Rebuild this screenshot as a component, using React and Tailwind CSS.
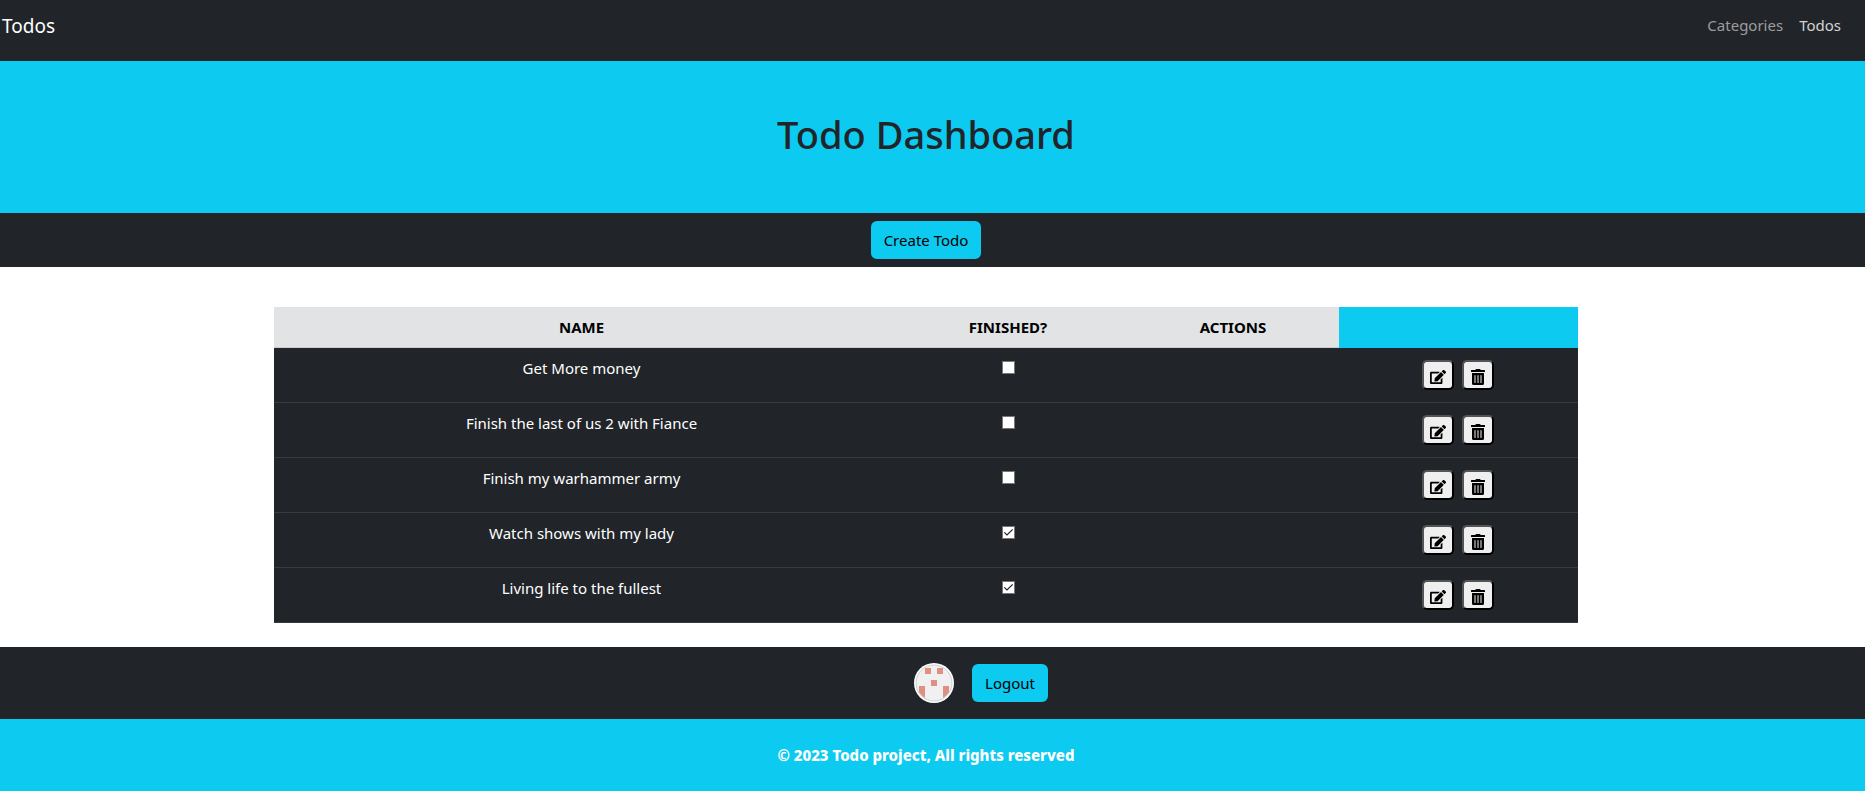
import { useState } from "react";
import { FaEdit, FaTrashAlt } from "react-icons/fa";

const initialTodos = [
  { id: 1, name: "Get More money", finished: false },
  { id: 2, name: "Finish the last of us 2 with Fiance", finished: false },
  { id: 3, name: "Finish my warhammer army", finished: false },
  { id: 4, name: "Watch shows with my lady", finished: true },
  { id: 5, name: "Living life to the fullest", finished: true },
];

function InfoButton({ children }) {
  return (
    <button type="button" className="h-[38px] rounded-md bg-[#0dcaf0] px-[13px] text-[15px] leading-6 text-black">
      {children}
    </button>
  );
}

function IconButton({ label, children }) {
  return (
    <button
      type="button"
      aria-label={label}
      className="flex h-[30px] w-8 items-end justify-center rounded-[5px] border-2 border-black bg-[#efefef] pb-[3px] text-black [border-style:outset]"
    >
      {children}
    </button>
  );
}

function Checkbox({ label, checked, onChange }) {
  return (
    <span className="relative mt-[5px] block size-[13px]">
      <input
        type="checkbox"
        aria-label={label}
        checked={checked}
        onChange={onChange}
        className="peer block size-[13px] appearance-none border border-[#767676] bg-white"
      />
      <svg
        viewBox="0 0 13 13"
        aria-hidden="true"
        className="pointer-events-none absolute inset-0 hidden size-[13px] peer-checked:block"
      >
        <path d="M2.3 6.3 5 9 10.7 3.3" fill="none" stroke="#222" strokeWidth="1.2" />
      </svg>
    </span>
  );
}

function Avatar() {
  return (
    <svg viewBox="0 0 40 40" role="img" aria-label="User avatar" className="size-10">
      <defs>
        <clipPath id="avatar-face">
          <circle cx="20" cy="20" r="17.5" />
        </clipPath>
      </defs>
      <circle cx="20" cy="20" r="20" fill="#fff" />
      <circle cx="20" cy="20" r="18" fill="#f0f0f0" stroke="#b9bdc0" strokeWidth="0.7" />
      <g clipPath="url(#avatar-face)" fill="#df8f84">
        <rect x="11" y="5" width="6" height="6" />
        <rect x="23" y="5" width="6" height="6" />
        <rect x="17" y="17" width="6" height="6" />
        <rect x="5" y="23" width="6" height="12" />
        <rect x="29" y="23" width="6" height="12" />
      </g>
    </svg>
  );
}

export default function App() {
  const [todos, setTodos] = useState(initialTodos);
  const toggle = (id) =>
    setTodos(todos.map((t) => (t.id === id ? { ...t, finished: !t.finished } : t)));

  return (
    <div className="bg-white font-['Noto_Sans','Open_Sans',sans-serif] text-[15px] leading-6 text-[#212529]">
      <nav className="flex h-[61px] items-start justify-between bg-[#212529] pt-[11px] pr-6 pl-0.5">
        <a href="#home" className="text-[19px] leading-[30px] text-white">Todos</a>
        <div className="flex gap-4 pt-0.5">
          <a href="#categories" className="text-[#9b9d9f]">Categories</a>
          <a href="#todos" className="text-[#d3d3d4]">Todos</a>
        </div>
      </nav>

      <header className="flex h-[152px] justify-center bg-[#0dcaf0] pt-12 pr-[13px]">
        <h1 className="text-[38px] leading-[50px] font-medium">Todo Dashboard</h1>
      </header>

      <div className="flex justify-center bg-[#212529] py-2 pr-[13px]">
        <InfoButton>Create Todo</InfoButton>
      </div>

      <main className="flex justify-center pt-10 pr-[13px] pb-6">
        <table className="w-full max-w-[1304px] table-fixed border-collapse text-center">
          <colgroup>
            <col />
            <col className="w-[238px]" />
            <col className="w-[212px]" />
            <col className="w-[239px]" />
          </colgroup>
          <thead>
            <tr className="h-[41px] bg-[#e2e3e5] align-top text-black shadow-[inset_0_-1px_#cbccce]">
              <th className="pt-2 font-bold">NAME</th>
              <th className="pt-2 font-bold">FINISHED?</th>
              <th className="pt-2 font-bold">ACTIONS</th>
              <td className="bg-[#0dcaf0]" />
            </tr>
          </thead>
          <tbody>
            {todos.map((todo) => (
              <tr key={todo.id} className="h-[55px] bg-[#212529] align-top text-white shadow-[inset_0_-1px_#373b3e]">
                <td className="px-2 pt-2">{todo.name}</td>
                <td className="pt-2">
                  <div className="flex justify-center">
                    <Checkbox
                      label={`Finished: ${todo.name}`}
                      checked={todo.finished}
                      onChange={() => toggle(todo.id)}
                    />
                  </div>
                </td>
                <td />
                <td className="pt-3 pr-0.5">
                  <div className="flex justify-center gap-2">
                    <IconButton label={`Edit ${todo.name}`}>
                      <FaEdit size={16} />
                    </IconButton>
                    <IconButton label={`Delete ${todo.name}`}>
                      <FaTrashAlt size={16} />
                    </IconButton>
                  </div>
                </td>
              </tr>
            ))}
          </tbody>
        </table>
      </main>

      <div className="flex h-[72px] items-center justify-center gap-[18px] bg-[#212529] pr-[13px] pl-[110px]">
        <Avatar />
        <InfoButton>Logout</InfoButton>
      </div>

      <footer className="flex h-[72px] items-center justify-center bg-[#0dcaf0] pr-[13px]">
        <p className="font-extrabold text-white">© 2023 Todo project, All rights reserved</p>
      </footer>
    </div>
  );
}
